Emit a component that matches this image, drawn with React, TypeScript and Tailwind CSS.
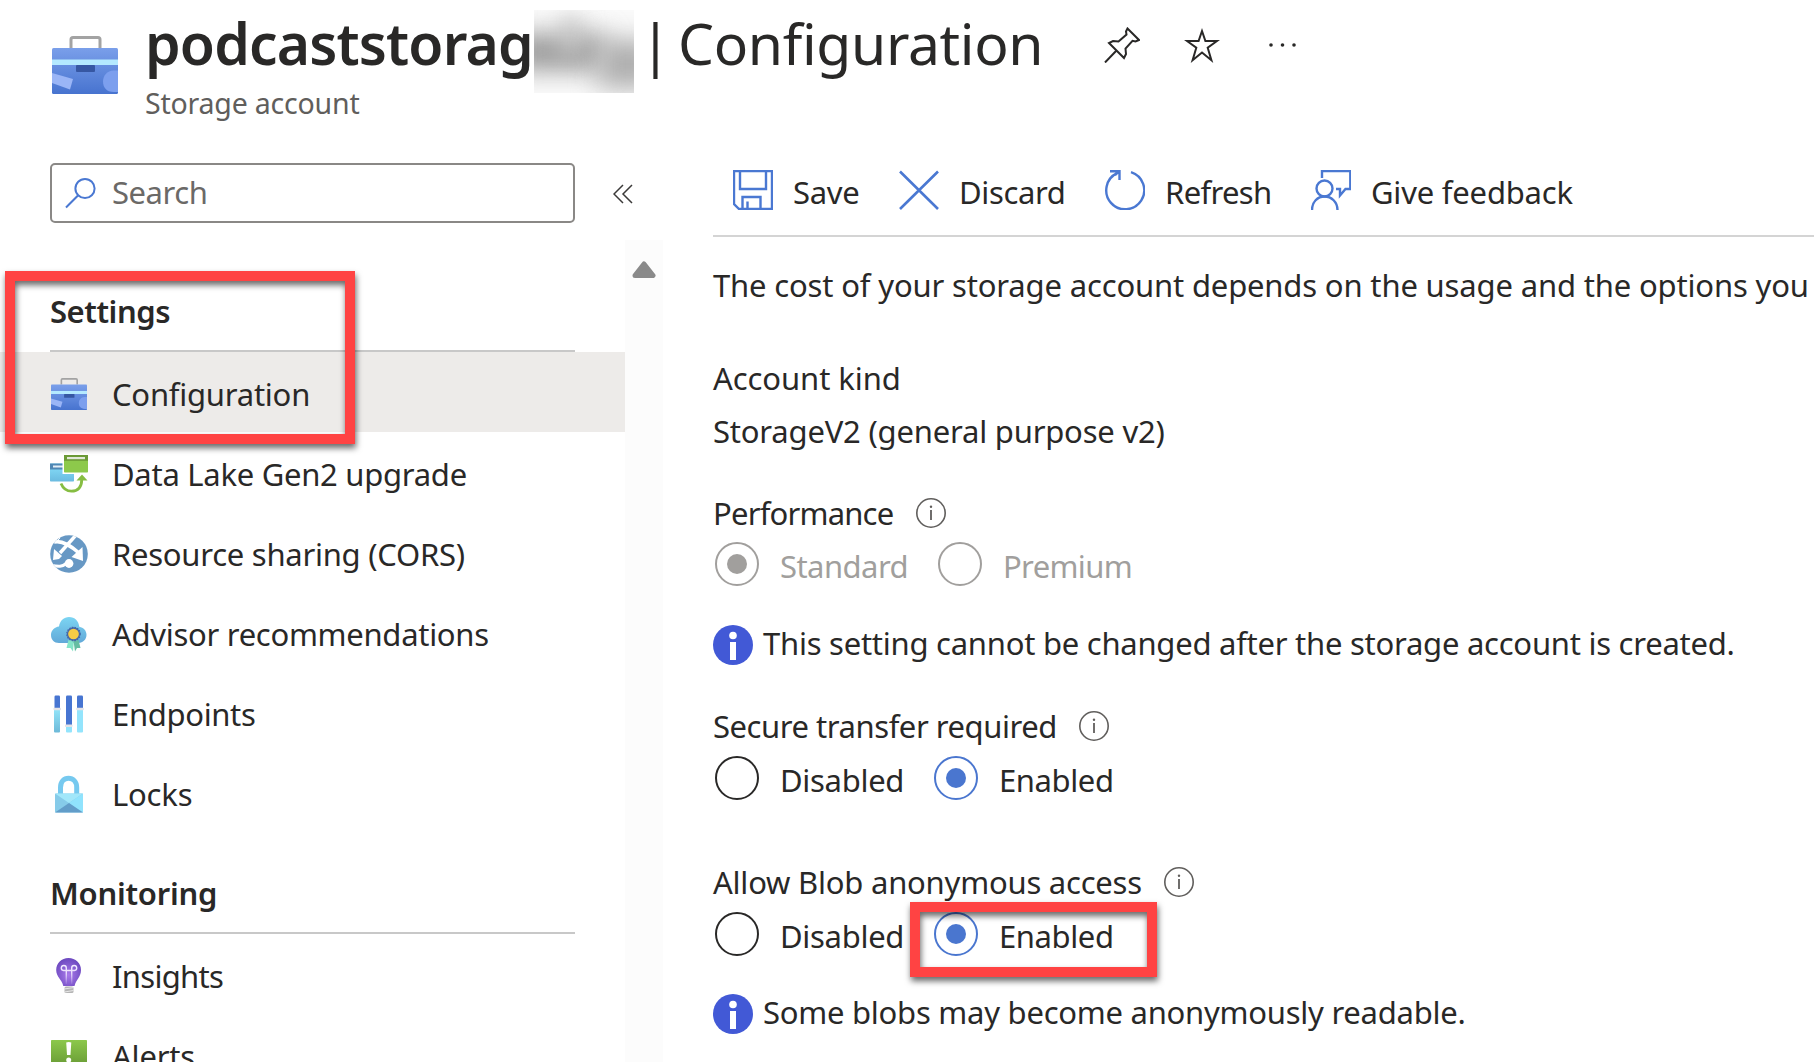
import type { ReactNode } from 'react';

function Toolbox({ className, id }: { className: string; id: string }) {
  return (
    <svg viewBox="0 0 66 58" preserveAspectRatio="none" className={className}>
      <defs>
        <linearGradient id={id} x1="0" y1="0" x2="0" y2="1">
          <stop offset="0" stopColor="#7a9fea" />
          <stop offset="1" stopColor="#4773cf" />
        </linearGradient>
      </defs>
      <path d="M19 12V3.5Q19 1.5 21 1.5H46Q48 1.5 48 3.5V12" fill="none" stroke="#a3a3a3" strokeWidth="3" />
      <rect y="12" width="66" height="46" rx="1.5" fill={`url(#${id})`} />
      <path d="M0 37L21 43L18 53.500L0 47Z" fill="#9ab5f6" />
      <path d="M66 34.500V56H62C54 56 51 51 51 45.500S55 34.500 61.500 34.500Z" fill="#7c9fee" />
      <rect y="23.500" width="66" height="5.500" fill="#b4e9ff" />
      <rect x="24" y="29" width="19" height="7" rx="1" fill="#3657a3" />
    </svg>
  );
}

function DataLakeIcon() {
  return (
    <svg viewBox="0 0 38 38" className="size-[38px]">
      <defs>
        <linearGradient id="dl-blue" x1="0" y1="0" x2="0" y2="1">
          <stop offset="0" stopColor="#87e0fb" />
          <stop offset="1" stopColor="#6bbbe0" />
        </linearGradient>
      </defs>
      <rect y="8.500" width="24" height="18" rx=".8" fill="url(#dl-blue)" />
      <rect y="8.500" width="24" height="6" fill="#4f87b4" />
      <rect x="3" y="10.500" width="14" height="2" fill="#e4eef5" />
      <path d="M12.500 0H38V19H12.500Z" fill="#fff" />
      <rect x="14" width="24" height="17.500" rx=".8" fill="#8dc94b" />
      <rect x="14" width="24" height="5.800" fill="#6b9a36" />
      <rect x="17" y="2" width="18" height="2.200" fill="#e0e8d6" />
      <path d="M11 28.500C13.500 34.500 17 36.200 21.500 36.200C28 36.200 31.700 32 31.700 25" fill="none" stroke="#86bd42" strokeWidth="2.800" />
      <path d="M32 19.500L37.500 25.500H26.500Z" fill="#86bd42" />
    </svg>
  );
}

function CorsIcon() {
  return (
    <svg viewBox="0 0 38 38" className="size-[38px]">
      <defs>
        <clipPath id="cors-clip">
          <circle cx="19" cy="19" r="18.800" />
        </clipPath>
      </defs>
      <g clipPath="url(#cors-clip)">
        <rect width="38" height="38" fill="#6798c4" />
        <path d="M4 7C12 5 20 10 29 18" fill="none" stroke="#fff" strokeWidth="3.600" />
        <path d="M26 0L10 18" fill="none" stroke="#fff" strokeWidth="3.400" />
        <path d="M3 25L4 14L12 21L9 24Z" fill="#fff" />
        <path d="M33 26L21.500 22L32.500 12Z" fill="#fff" />
        <path d="M0 30C9 32 12 32 17 28" fill="none" stroke="#fff" strokeWidth="3" />
        <circle cx="19" cy="28.500" r="4.400" fill="#fff" />
        <path d="M7 6L10 3" stroke="#fff" strokeWidth="1" />
      </g>
    </svg>
  );
}

function AdvisorIcon() {
  return (
    <svg viewBox="0 0 38 38" className="size-[38px]">
      <defs>
        <linearGradient id="adv-cloud" x1="0" y1="0" x2="0" y2="1">
          <stop offset="0" stopColor="#7cd5f3" />
          <stop offset="1" stopColor="#62a9d8" />
        </linearGradient>
      </defs>
      <path d="M9 28C4 28 1 24.500 1 20C1 15.500 4.500 12 9 11.500C10 5.500 14 2 19 2C25 2 28.700 6 29.300 11.700C33.500 12.500 36.500 15.500 36.500 19.800C36.500 24.500 33 28 28.500 28Z" fill="url(#adv-cloud)" />
      <path d="M18.500 25L16.500 33L20.500 33L23 36.500L24 25Z" fill="#86e5c8" />
      <path d="M28.500 25L30.500 33L27 33L25 36.500L23.500 26Z" fill="#66bda2" />
      <circle cx="23.500" cy="19" r="6" fill="#f6cb45" stroke="#4566a6" strokeWidth="1.300" />
      <circle cx="23.500" cy="19" r="6.700" fill="none" stroke="#4566a6" strokeWidth="1.300" strokeDasharray="1.500 1.200" />
    </svg>
  );
}

function EndpointsIcon() {
  return (
    <svg viewBox="0 0 38 38" className="size-[38px]">
      <defs>
        <linearGradient id="ep-l" x1="0" y1="0" x2="0" y2="1">
          <stop offset="0" stopColor="#95e7fb" />
          <stop offset="1" stopColor="#6db9d8" />
        </linearGradient>
      </defs>
      <rect x="4" y="13" width="6" height="24.500" rx="1" fill="url(#ep-l)" />
      <rect x="4.500" y=".5" width="5.500" height="13" rx="1.200" fill="#4775d1" />
      <rect x="3.500" y="12.700" width="7.500" height="2.600" rx=".8" fill="#e3e3e8" />
      <rect x="16" y="30" width="6" height="7.500" rx="1" fill="#93e4fc" />
      <rect x="16" y=".5" width="6" height="30" rx="1.200" fill="#4775d1" />
      <rect x="15" y="29.500" width="7.500" height="2.600" rx=".8" fill="#e3e3e8" />
      <rect x="27" y="13" width="6" height="24.500" rx="1" fill="#93e4fc" />
      <rect x="27" y=".5" width="6" height="13" rx="1.200" fill="#4775d1" />
      <rect x="26.300" y="12.700" width="7.500" height="2.600" rx=".8" fill="#e3e3e8" />
    </svg>
  );
}

function LockIcon() {
  return (
    <svg viewBox="0 0 38 38" className="size-[38px]">
      <path d="M10.500 20V12.500C10.500 6.500 14 3.300 18.500 3.300S26.700 6.500 26.700 12.500V20" fill="none" stroke="#76c9ef" strokeWidth="5" />
      <rect x="5" y="18.500" width="28" height="19" rx=".8" fill="#86cbe9" />
      <path d="M5 18.500H33L19 28Z" fill="#a2e7fa" />
      <path d="M33 18.500V37.500L19 28Z" fill="#90e3fd" />
      <path d="M5 37.500H33L19 28Z" fill="#629dc9" />
    </svg>
  );
}

function InsightsIcon() {
  return (
    <svg viewBox="0 0 38 38" className="size-[38px]">
      <defs>
        <radialGradient id="ins-g" cx=".5" cy=".6" r=".6">
          <stop offset="0" stopColor="#a97bea" />
          <stop offset="1" stopColor="#6c48bf" />
        </radialGradient>
        <linearGradient id="ins-f" gradientUnits="userSpaceOnUse" x1="0" y1="8" x2="0" y2="27">
          <stop offset="0" stopColor="#f3ecff" />
          <stop offset=".4" stopColor="#eadffb" />
          <stop offset="1" stopColor="#eadffb" stopOpacity="0.100" />
        </linearGradient>
      </defs>
      <path d="M18.500 1C11.500 1 6.200 6.300 6.200 13C6.200 20 12 22.500 13.300 29H24.500C26 22.500 31 20 31 13C31 6.300 25.500 1 18.500 1Z" fill="url(#ins-g)" />
      <path d="M16.300 27V11A2.500 2.500 0 1 0 13.500 13.500H24.500A2.500 2.500 0 1 0 21.700 11V27" fill="none" stroke="url(#ins-f)" strokeWidth="1.400" />
      <rect x="14.500" y="29.500" width="9" height="6.500" rx="1.500" fill="#b5b5b5" />
      <path d="M14 32L24 30.500M14.500 35L23.500 33.500" stroke="#e8e8e8" strokeWidth="1" />
    </svg>
  );
}

function AlertsIcon() {
  return (
    <svg viewBox="0 0 38 38" className="size-[38px]">
      <defs>
        <linearGradient id="al-g" x1="0" y1="0" x2="0" y2="1">
          <stop offset="0" stopColor="#8cc84b" />
          <stop offset="1" stopColor="#5f8f30" />
        </linearGradient>
      </defs>
      <rect x="1" y="3" width="36" height="33" rx=".8" fill="url(#al-g)" />
      <path d="M16.200 5.500Q18.700 4.500 21.300 5.500L20.500 18H17Z" fill="#fff" />
      <circle cx="18.700" cy="23" r="2.500" fill="#fff" />
    </svg>
  );
}

function NavItem({ icon, children, selected }: { icon: ReactNode; children: ReactNode; selected?: boolean }) {
  return (
    <a className={`flex h-20 items-center pl-[50px] ${selected ? 'bg-[#edebe9]' : ''}`}>
      <span className="w-[62px] shrink-0 pt-[3px]">{icon}</span>
      <span className="pt-[3px]">{children}</span>
    </a>
  );
}

function NavHeading({ children }: { children: ReactNode }) {
  return (
    <h2 className="mr-[50px] ml-[50px] h-[61px] border-b-2 border-[#c8c8c8] font-semibold">{children}</h2>
  );
}

function InfoOutline() {
  return (
    <svg viewBox="0 0 30 30" className="size-[30px]">
      <circle cx="15" cy="15" r="14.200" fill="none" stroke="#605e5c" strokeWidth="1.600" />
      <path d="M15 12V22" stroke="#605e5c" strokeWidth="1.800" />
      <circle cx="15" cy="8.700" r="1.200" fill="#605e5c" />
    </svg>
  );
}

function InfoSolid() {
  return (
    <svg viewBox="0 0 40 40" className="mt-[2px] size-10 shrink-0">
      <circle cx="20" cy="20" r="20" fill="#4259d6" />
      <circle cx="20" cy="10.500" r="3.800" fill="#fff" />
      <rect x="17" y="17" width="6" height="18" fill="#fff" />
    </svg>
  );
}

function FieldLabel({ children }: { children: ReactNode }) {
  return (
    <div className="flex h-10 items-center gap-[22px] pt-[1px]">
      <span>{children}</span>
      <InfoOutline />
    </div>
  );
}

function Radio({ tone, checked, className, children }: { tone: 'grey' | 'dark' | 'blue'; checked?: boolean; className?: string; children: ReactNode }) {
  const ring = { grey: 'border-[#a19f9d]', dark: 'border-[#292827]', blue: 'border-[#4a76cf]' }[tone];
  const dot = { grey: 'bg-[#a19f9d]', dark: 'bg-[#292827]', blue: 'bg-[#4a76cf]' }[tone];
  return (
    <label className={`flex h-11 items-center gap-[21px] ${tone === 'grey' ? 'text-[#a19f9d]' : ''} ${className ?? ''}`}>
      <span className={`flex size-11 items-center justify-center rounded-full border-2 ${ring}`}>
        {checked && <span className={`size-5 rounded-full ${dot}`} />}
      </span>
      <span className="pt-[3px]">{children}</span>
    </label>
  );
}

function Command({ icon, className, children }: { icon: ReactNode; className: string; children: ReactNode }) {
  return (
    <button className={`flex items-center gap-5 ${className}`}>
      {icon}
      <span className="pt-[3px]">{children}</span>
    </button>
  );
}

const cmd = 'size-10 shrink-0 fill-none stroke-[#4a78d2]';

export default function App() {
  return (
    <div className="relative flex h-[1062px] w-[1814px] flex-col overflow-hidden bg-white font-['Noto_Sans','Open_Sans',sans-serif] text-[31px] leading-[40px] whitespace-nowrap text-[#292827]">
      <header className="flex h-[150px] shrink-0 pl-[52px]">
        <Toolbox id="tb-lg" className="mt-9 h-[58px] w-[66px]" />
        <div className="ml-[27px] pt-[5px]">
          <h1 className="flex h-[76px] text-[57px] leading-[76px]">
            <span className="w-[389px] font-semibold tracking-[-0.85px]">podcaststorag</span>
            <span className="relative mt-[5px] h-[83px] w-[100px] shrink-0 overflow-hidden bg-[#fafafa]">
              <span className="absolute top-[24px] -left-5 h-[36px] w-[90px] bg-[#999999] blur-[13px]" />
              <span className="absolute top-[6px] left-[28px] h-[40px] w-[18px] bg-[#c8c8c8] blur-[11px]" />
              <span className="absolute top-[30px] left-[64px] h-[48px] w-[60px] bg-[#aeaeae] blur-[13px]" />
            </span>
            <span className="w-[43px] text-center">|</span>
            <span className="pl-[1px] tracking-[-0.35px]">Configuration</span>
          </h1>
          <p className="mt-[2px] text-[28.5px] tracking-[-0.2px] text-[#605e5c]">Storage account</p>
        </div>
        <div className="mt-[27px] ml-[61px] flex h-9">
          <svg viewBox="0 0 36 36" className="size-9 fill-none stroke-[#292827] stroke-2">
            <path d="M1 35.500L12.500 23.500M23.500 1.500L35 13L31.500 14.500L28.500 13.800L21.500 21.500L22 27L20 31L5 16L9 14L14.500 14.500L22.500 7.500L22 4.500Z" />
          </svg>
          <svg viewBox="0 0 36 36" className="ml-[44px] size-9 fill-none stroke-[#292827] stroke-2">
            <path d="M18 4L21.400 14H33L23.700 20.700L27.400 33.200L18 25.500L8.600 33.200L12.300 20.700L3 14H14.600Z" />
          </svg>
          <svg viewBox="0 0 30 36" className="ml-[48px] h-9 w-[30px] fill-[#292827]">
            <circle cx="3" cy="18" r="1.800" />
            <circle cx="14.500" cy="18" r="1.800" />
            <circle cx="26" cy="18" r="1.800" />
          </svg>
        </div>
      </header>

      <div className="flex min-h-0 flex-1">
        <aside className="flex w-[663px] shrink-0 flex-col">
          <div className="flex h-[90px] shrink-0 pt-[13px] pl-[50px]">
            <div className="flex h-[60px] w-[525px] items-center rounded-[5px] border-2 border-[#8a8886] pl-[13px] text-[#6b6967]">
              <svg viewBox="0 0 32 32" className="size-8 fill-none stroke-[#4a78d2] stroke-2">
                <circle cx="20" cy="11.500" r="9.600" />
                <path d="M13.200 18.300L1 30.500" />
              </svg>
              <span className="ml-[15px] pb-[2px] tracking-[-0.45px]">Search</span>
            </div>
            <svg viewBox="0 0 20 20" className="mt-[21px] ml-[38px] size-5 fill-none stroke-[#3b3a39] stroke-[1.5]">
              <path d="M10 1L1 10L10 19M19 1L10 10L19 19" />
            </svg>
          </div>
          <div className="flex min-h-0 flex-1 overflow-hidden">
            <nav className="w-[625px] shrink-0 pt-[51px]">
              <NavHeading><span className="tracking-[-0.45px]">Settings</span></NavHeading>
              <NavItem selected icon={<Toolbox id="tb-sm" className="ml-[1px] h-8 w-9" />}><span className="tracking-[-0.23px]">Configuration</span></NavItem>
              <NavItem icon={<DataLakeIcon />}><span className="tracking-[-0.27px]">Data Lake Gen2 upgrade</span></NavItem>
              <NavItem icon={<CorsIcon />}><span className="tracking-[-0.26px]">Resource sharing (CORS)</span></NavItem>
              <NavItem icon={<AdvisorIcon />}><span className="tracking-[-0.29px]">Advisor recommendations</span></NavItem>
              <NavItem icon={<EndpointsIcon />}><span className="tracking-[-0.33px]">Endpoints</span></NavItem>
              <NavItem icon={<LockIcon />}><span className="tracking-[-0.2px]">Locks</span></NavItem>
              <div className="h-[41px]" />
              <NavHeading><span className="tracking-[-0.25px]">Monitoring</span></NavHeading>
              <NavItem icon={<InsightsIcon />}><span className="tracking-[-0.7px]">Insights</span></NavItem>
              <NavItem icon={<AlertsIcon />}><span className="tracking-[-0.2px]">Alerts</span></NavItem>
            </nav>
            <div className="w-[38px] bg-[#fcfcfc] pt-[21px] pl-[7px]">
              <svg viewBox="0 0 24 19" className="h-[19px] w-6">
                <path d="M12 3L21 14.500H3Z" fill="#8a8a8a" stroke="#8a8a8a" strokeWidth="5" strokeLinejoin="round" />
              </svg>
            </div>
          </div>
        </aside>

        <main className="ml-[50px] flex-1">
          <div className="flex h-[87px] items-center border-b-2 border-[#d4d4d4] pb-[5px] pl-5">
            <Command className="w-[166px]" icon={
              <svg viewBox="0 0 40 40" className={`${cmd} stroke-[2.4]`}>
                <path d="M1 1H39V39H6L1 34Z" />
                <path d="M7 1V19H33V1M9.500 39V27H27.500V39M14.500 39V31.500" />
              </svg>}><span className="tracking-[-0.3px]">Save</span></Command>
            <Command className="w-[206px]" icon={
              <svg viewBox="0 0 40 40" className={`${cmd} stroke-[2.6]`}><path d="M1 1.500L39 39M39 1.500L1 39" /></svg>}><span className="tracking-[-0.35px]">Discard</span></Command>
            <Command className="w-[206px]" icon={
              <svg viewBox="0 0 40 40" className={`${cmd} stroke-[2.4]`}>
                <path d="M26 2.200A19 19 0 1 1 12 3.200M5 1.200H14.500V10M14.500 1.200L10 5" />
              </svg>}><span className="tracking-[-0.65px]">Refresh</span></Command>
            <Command className="" icon={
              <svg viewBox="0 0 40 40" className={`${cmd} stroke-[2.4]`}>
                <circle cx="13.500" cy="18.500" r="8" />
                <path d="M1 40C1 32 6.500 26.500 13.500 26.500S26.500 32 26.500 40M11 8V1H39.300V19H34.500L29 25.500V19H25" />
              </svg>}><span className="tracking-[-0.2px]">Give feedback</span></Command>
          </div>

          <p className="mt-7 tracking-[-0.16px]">The cost of your storage account depends on the usage and the options you</p>
          <p className="mt-[53px] tracking-[-0.08px]">Account kind</p>
          <p className="mt-[13px] tracking-[-0.2px]">StorageV2 (general purpose v2)</p>

          <section className="mt-[41px]">
            <FieldLabel><span className="mr-[1px] tracking-[-0.8px]">Performance</span></FieldLabel>
            <div className="mt-[10px] flex pl-[2px]">
              <Radio tone="grey" checked className="w-[223px]"><span className="tracking-[-0.55px]">Standard</span></Radio>
              <Radio tone="grey"><span className="tracking-[-0.65px]">Premium</span></Radio>
            </div>
            <p className="mt-[37px] flex gap-[10px]">
              <InfoSolid />
              <span className="tracking-[-0.25px]">This setting cannot be changed after the storage account is created.</span>
            </p>
          </section>

          <section className="mt-10">
            <FieldLabel><span className="tracking-[-0.45px]">Secure transfer required</span></FieldLabel>
            <div className="mt-[11px] flex pl-[2px]">
              <Radio tone="dark" className="w-[219px]"><span className="tracking-[-0.3px]">Disabled</span></Radio>
              <Radio tone="blue" checked><span className="tracking-[-0.4px]">Enabled</span></Radio>
            </div>
          </section>

          <section className="mt-[61px]">
            <FieldLabel><span className="tracking-[-0.22px]">Allow Blob anonymous access</span></FieldLabel>
            <div className="mt-[11px] flex pl-[2px]">
              <Radio tone="dark" className="w-[219px]"><span className="tracking-[-0.3px]">Disabled</span></Radio>
              <Radio tone="blue" checked><span className="tracking-[-0.4px]">Enabled</span></Radio>
            </div>
            <p className="mt-9 flex gap-[10px]">
              <InfoSolid />
              <span className="tracking-[-0.25px]">Some blobs may become anonymously readable.</span>
            </p>
          </section>
        </main>
      </div>

      <div className="absolute top-[271px] left-[5px] h-[173px] w-[350px] border-[10px] border-[#ff4343] drop-shadow-[1px_4px_3px_rgba(0,0,0,0.6)]" />
      <div className="absolute top-[902px] left-[910px] h-[75px] w-[247px] border-[10px] border-[#ff4343] drop-shadow-[1px_4px_3px_rgba(0,0,0,0.6)]" />
    </div>
  );
}
